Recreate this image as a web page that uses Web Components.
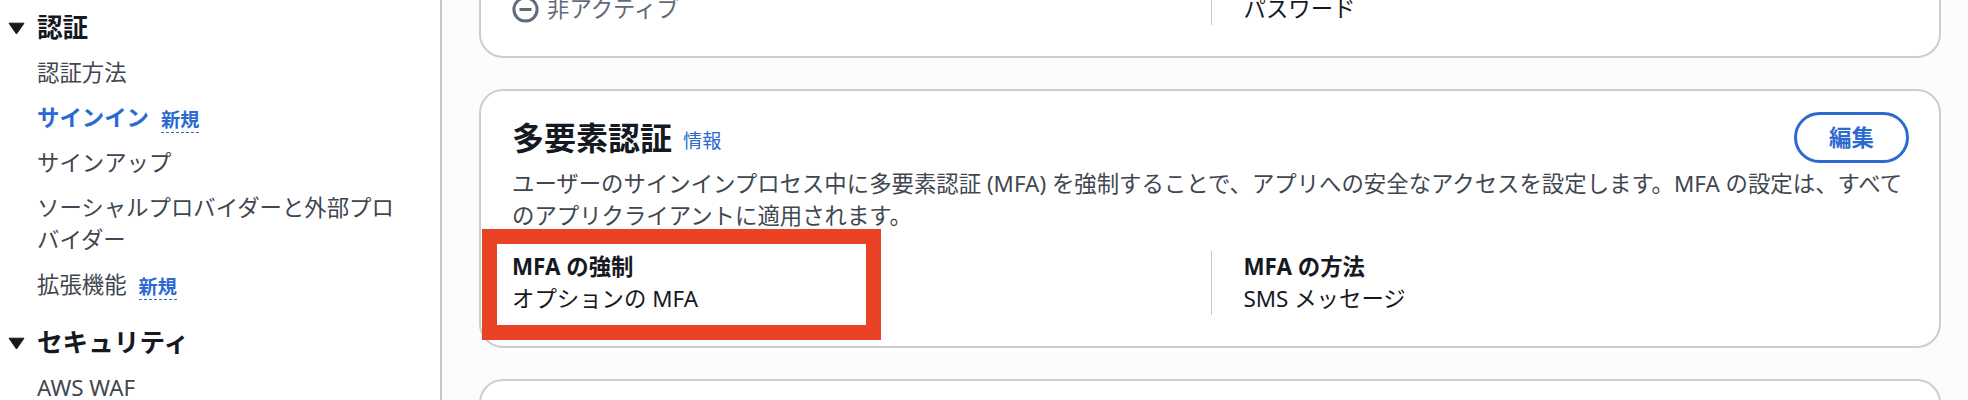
<!DOCTYPE html>
<html lang="ja">
<head>
<meta charset="utf-8">
<title>サインイン</title>
<style>
html,body{margin:0;height:400px;overflow:hidden;background:#fcfcfc;}
body{font-family:"Noto Sans","Noto Sans CJK JP",sans-serif;font-size:22.4px;color:#16191f;}
</style>
</head>
<body>
<app-shell>
  <side-nav slot="nav">
    <nav-section label="認証">
      <nav-item>認証方法</nav-item>
      <nav-item active badge>サインイン</nav-item>
      <nav-item>サインアップ</nav-item>
      <nav-item>ソーシャルプロバイダーと外部プロバイダー</nav-item>
      <nav-item badge>拡張機能</nav-item>
    </nav-section>
    <nav-section label="セキュリティ">
      <nav-item>AWS WAF</nav-item>
    </nav-section>
  </side-nav>
  <info-card style="margin-top:-28px;--top:19px">
    <field-grid>
      <field-cell><status-off>非アクティブ</status-off></field-cell>
      <field-cell divided>パスワード</field-cell>
    </field-grid>
  </info-card>
  <info-card>
    <card-head heading="多要素認証"></card-head>
    <card-text>ユーザーのサインインプロセス中に多要素認証 (MFA) を強制することで、アプリへの安全なアクセスを設定します。MFA の設定は、すべてのアプリクライアントに適用されます。</card-text>
    <field-grid>
      <field-cell label="MFA の強制" highlight>オプションの MFA</field-cell>
      <field-cell label="MFA の方法" divided>SMS メッセージ</field-cell>
    </field-grid>
  </info-card>
  <info-card></info-card>
</app-shell>
<script>
const def=(name,html)=>customElements.define(name,class extends HTMLElement{
  connectedCallback(){
    if(this.shadowRoot)return;
    const r=this.attachShadow({mode:'open'});
    r.innerHTML=typeof html==='function'?html(this):html;
  }
});
def('app-shell',`<style>
:host{display:flex;height:400px;overflow:hidden;align-items:flex-start}
.nav{flex:0 0 440px;height:400px;background:#fff;border-right:2px solid #c6c6cd;overflow:hidden}
main{flex:1;min-width:0;display:flex;flex-direction:column;gap:31px;padding:0 27px 0 37px}
</style><div class="nav"><slot name="nav"></slot></div><main><slot></slot></main>`);
def('side-nav',`<style>
:host{display:flex;flex-direction:column;gap:26px;padding:12px 0 0 8px;width:392px}
</style><slot></slot>`);
def('nav-section',h=>`<style>
:host{display:block}
.h{display:flex;align-items:center;gap:12px;font-size:25.6px;line-height:32px;font-weight:700;color:#16191f}
svg{width:17px;height:13px;flex:none}
.list{display:flex;flex-direction:column;gap:13px;padding:13px 0 0 29px}
</style><div class="h"><svg viewBox="0 0 17 13"><path d="M1 1.2h15L8.5 12z" fill="#16191f" stroke="#16191f" stroke-width="1" stroke-linejoin="round"/></svg><span>${h.getAttribute('label')}</span></div><div class="list"><slot></slot></div>`);
def('nav-item',h=>`<style>
:host{display:block;font-size:22.4px;line-height:32px;color:${h.hasAttribute('active')?'#2c6ad2':'#414750'};font-weight:${h.hasAttribute('active')?700:400}}
.b{display:inline-block;margin-left:12px;font-size:19.2px;line-height:24px;font-weight:700;color:#2c6ad2;border-bottom:1.5px dashed #2c6ad2;vertical-align:-1px}
</style><slot></slot>${h.hasAttribute('badge')?'<span class="b">新規</span>':''}`);
def('info-card',`<style>
:host{display:block;background:#fff;border:2px solid #cdcdd0;border-radius:24px;padding:var(--top,20px) 30px 31px 31px;min-height:20px}
</style><slot></slot>`);
def('card-head',h=>`<style>
:host{display:flex;align-items:center;justify-content:space-between;height:53px}
.t{display:flex;align-items:center;gap:11px}
h2{margin:0;font-size:32px;line-height:40px;font-weight:700;color:#16191f}
a{font-size:19.2px;color:#2c6ad2;text-decoration:none;position:relative;top:2px}
button{font:700 22.4px/30px "Noto Sans","Noto Sans CJK JP",sans-serif;color:#2c6ad2;background:#fff;border:3px solid #2c6ad2;border-radius:26px;width:115px;height:51px;padding:0}
</style><div class="t"><h2>${h.getAttribute('heading')}</h2><a>情報</a></div><button>編集</button>`);
def('card-text',`<style>
:host{display:block;font-size:22.4px;line-height:32px;color:#414750;margin:4px 0 19px}
</style><slot></slot>`);
def('field-grid',`<style>
:host{display:grid;grid-template-columns:1fr 1fr}
</style><slot></slot>`);
def('field-cell',h=>`<style>
:host{display:block;position:relative;font-size:22.4px;line-height:32px;color:#16191f;${h.hasAttribute('divided')?'border-left:1.5px solid #c6c6cd;padding-left:32px;':''}}
.l{font-weight:700}
.mark{position:absolute;left:-30px;top:-22px;width:399px;height:111px;box-sizing:border-box;border:15px solid #e94225}
</style>${h.hasAttribute('label')?`<div class="l">${h.getAttribute('label')}</div>`:''}<slot></slot>${h.hasAttribute('highlight')?'<div class="mark"></div>':''}`);
def('status-off',`<style>
:host{display:flex;align-items:center;gap:8px;color:#5f6b7a}
svg{width:27px;height:27px;flex:none}
</style><svg viewBox="0 0 27 27"><circle cx="13.5" cy="13.5" r="11.6" fill="none" stroke="#5f6b7a" stroke-width="3"/><path d="M7.5 13.5h12" stroke="#5f6b7a" stroke-width="3"/></svg><slot></slot>`);
</script>
</body>
</html>
